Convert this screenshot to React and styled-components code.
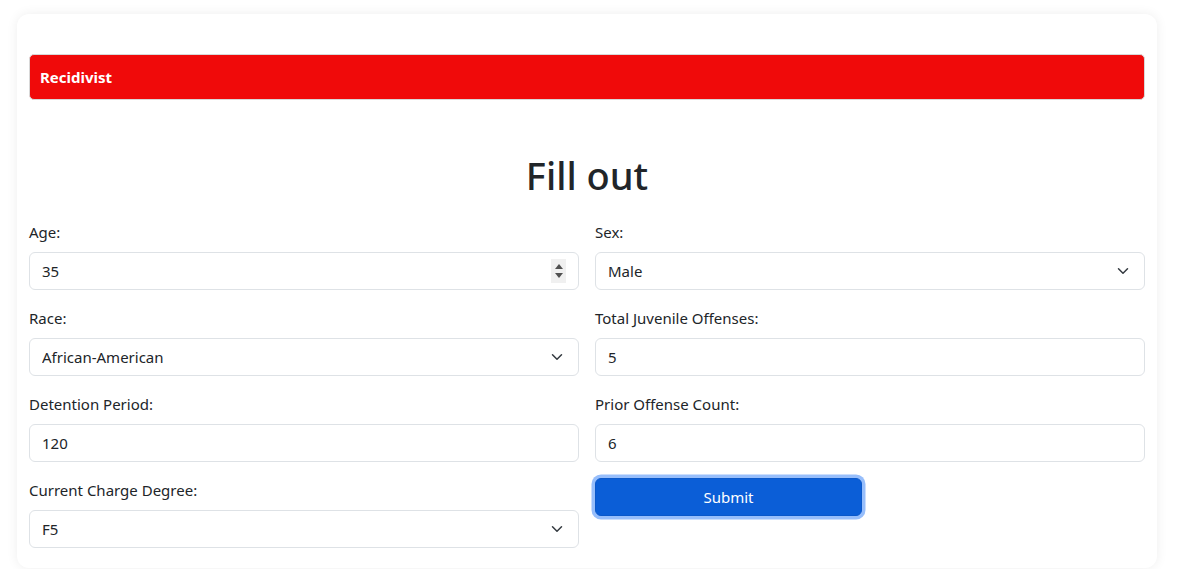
import React from "react";
import styled, { createGlobalStyle } from "styled-components";

const Global = createGlobalStyle`
  html, body { margin: 0; padding: 0; background: #fff; }
  body {
    font-family: "Noto Sans", "Open Sans", sans-serif;
    color: #212529;
    font-size: 16px;
    line-height: 1.5;
  }
  * { box-sizing: border-box; }
`;

const Page = styled.div`
  padding: 14px 0 0 17px;
`;

const Card = styled.div`
  width: 1140px;
  background: #fff;
  border-radius: 12px;
  box-shadow: 0 0 12px rgba(0, 0, 0, 0.07);
  padding: 40px 12px 4px;
`;

const Alert = styled.div`
  background: #f00a0a;
  border: 1px solid #d8d8d8;
  border-radius: 5px;
  color: #fff;
  font-weight: 700;
  font-size: 15px;
  line-height: 24px;
  padding: 10px 10px;
`;

const Title = styled.h1`
  margin: 51px 0 21px;
  text-align: center;
  font-size: 38px;
  font-weight: 500;
  line-height: 48px;
  color: #212529;
`;

const Grid = styled.div`
  display: grid;
  grid-template-columns: 1fr 1fr;
  column-gap: 16px;
`;

const Column = styled.div`
  display: flex;
  flex-direction: column;
`;

const Group = styled.div`
  margin-bottom: 16px;
  display: flex;
  flex-direction: column;
`;

const Label = styled.label`
  font-size: 15px;
  line-height: 24px;
  margin-bottom: 8px;
  color: #212529;
`;

const FieldWrap = styled.div`
  position: relative;
`;

const Input = styled.input`
  width: 100%;
  height: 38px;
  border: 1px solid #dee2e6;
  border-radius: 6px;
  padding: 6px 12px;
  font-family: inherit;
  font-size: 15px;
  color: #212529;
  background: #fff;
  outline: none;
`;

const Select = styled.select`
  width: 100%;
  height: 38px;
  border: 1px solid #dee2e6;
  border-radius: 6px;
  padding: 6px 36px 6px 12px;
  font-family: inherit;
  font-size: 15px;
  color: #212529;
  background: #fff;
  appearance: none;
  -webkit-appearance: none;
  outline: none;
`;

const Chevron = styled.svg`
  position: absolute;
  right: 14px;
  top: 13px;
  width: 16px;
  height: 12px;
  pointer-events: none;
`;

const Spinner = styled.div`
  position: absolute;
  right: 13px;
  top: 7px;
  width: 15px;
  height: 24px;
  background: #f0f0f0;
  display: flex;
  flex-direction: column;
  align-items: center;
  justify-content: center;
  gap: 4px;
  pointer-events: none;
`;

const Button = styled.button`
  width: 267px;
  height: 38px;
  border: 1px solid #0a58ca;
  border-radius: 6px;
  background: #0b5ed7;
  color: #fff;
  font-family: inherit;
  font-size: 15px;
  box-shadow: 0 0 0 3.5px #97befb;
  cursor: pointer;
`;

const BottomEdge = styled.div`
  margin-top: 1px;
  height: 1px;
  background: linear-gradient(to right, #c4c4c4 0 216px, #dcdcdc 216px 100%);
`;

const ChevronIcon = () => (
  <Chevron viewBox="0 0 16 16" aria-hidden="true">
    <path d="m2 5 6 6 6-6" fill="none" stroke="#343a40" strokeWidth="2" strokeLinecap="round" strokeLinejoin="round" />
  </Chevron>
);

const SpinIcon = () => (
  <Spinner>
    <svg width="8" height="5" viewBox="0 0 8 5"><path d="M4 0 8 5H0z" fill="#505050" /></svg>
    <svg width="8" height="5" viewBox="0 0 8 5"><path d="M0 0h8L4 5z" fill="#505050" /></svg>
  </Spinner>
);

const TextField = ({ label, value, spin }) => (
  <Group>
    <Label>{label}</Label>
    <FieldWrap>
      <Input type="text" defaultValue={value} />
      {spin && <SpinIcon />}
    </FieldWrap>
  </Group>
);

const SelectField = ({ label, value, options }) => (
  <Group>
    <Label>{label}</Label>
    <FieldWrap>
      <Select defaultValue={value}>
        {options.map((o) => (
          <option key={o}>{o}</option>
        ))}
      </Select>
      <ChevronIcon />
    </FieldWrap>
  </Group>
);

export default function App() {
  return (
    <>
      <Global />
      <Page>
        <Card>
          <Alert>Recidivist</Alert>
          <Title>Fill out</Title>
          <Grid>
            <Column>
              <TextField label="Age:" value="35" spin />
              <SelectField label="Race:" value="African-American" options={["African-American", "Caucasian", "Hispanic", "Asian", "Native American", "Other"]} />
              <TextField label="Detention Period:" value="120" />
              <SelectField label="Current Charge Degree:" value="F5" options={["F1", "F2", "F3", "F4", "F5", "F6", "F7", "M1", "M2"]} />
            </Column>
            <Column>
              <SelectField label="Sex:" value="Male" options={["Male", "Female"]} />
              <TextField label="Total Juvenile Offenses:" value="5" />
              <TextField label="Prior Offense Count:" value="6" />
              <Group>
                <Button type="button">Submit</Button>
              </Group>
            </Column>
          </Grid>
        </Card>
      </Page>
      <BottomEdge />
    </>
  );
}
